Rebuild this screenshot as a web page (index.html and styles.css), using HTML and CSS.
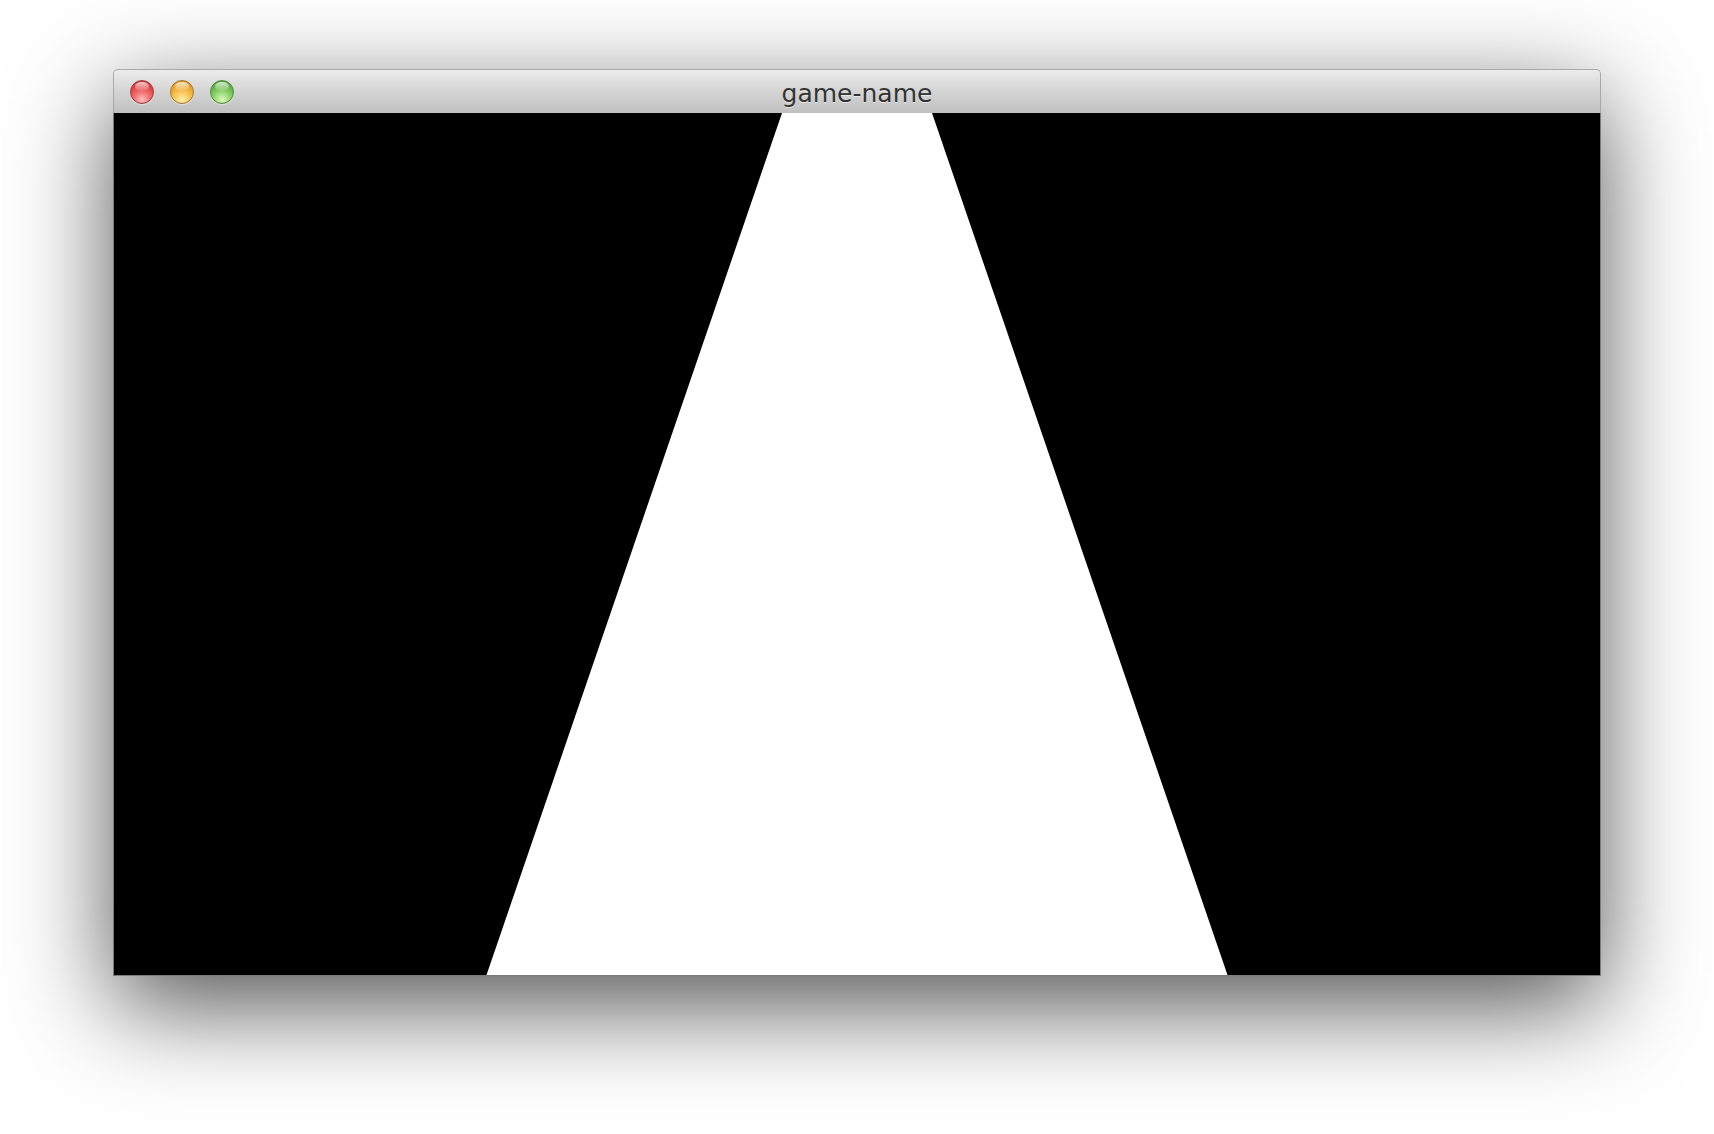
FILE: index.html
```html
<!DOCTYPE html>
<html>
<head>
<meta charset="utf-8">
<title>game-name</title>
<link rel="stylesheet" href="styles.css">
</head>
<body>
<div class="stage">
  <div class="window">
    <div class="titlebar">
      <div class="lights">
        <span class="light red"></span>
        <span class="light yellow"></span>
        <span class="light green"></span>
      </div>
      <div class="title">game-name</div>
    </div>
    <div class="screen">
      <svg class="scene" viewBox="0 0 1486 862" width="1486" height="862" xmlns="http://www.w3.org/2000/svg">
        <polygon points="668,0 818,0 1113.5,862 372.5,862" fill="#ffffff"/>
      </svg>
    </div>
  </div>
</div>
</body>
</html>
```

FILE: styles.css
```css
html, body {
  margin: 0;
  padding: 0;
}
body {
  background: #ffffff;
  width: 1714px;
  height: 1134px;
  overflow: hidden;
  font-family: "DejaVu Sans", "Liberation Sans", sans-serif;
}
.stage {
  padding: 69px 0 0 113px;
}
.window {
  width: 1488px;
  border-radius: 5px 5px 0 0;
  box-shadow: 0 30px 100px rgba(0, 0, 0, 0.68);
}
.titlebar {
  box-sizing: border-box;
  height: 44px;
  border: 1px solid #a9a9a9;
  border-bottom: none;
  border-radius: 5px 5px 0 0;
  background: linear-gradient(#ececec, #d6d6d6 45%, #c0c0c0);
  display: grid;
  align-items: center;
}
.lights,
.title {
  grid-area: 1 / 1;
}
.lights {
  display: flex;
  gap: 16px;
  padding-left: 16px;
  padding-top: 1px;
}
.light {
  width: 24px;
  height: 24px;
  border-radius: 50%;
  box-sizing: border-box;
  position: relative;
}
.light::after {
  content: "";
  position: absolute;
  left: 4px;
  top: 1px;
  width: 14px;
  height: 9px;
  border-radius: 50%;
  background: linear-gradient(rgba(255, 255, 255, 0.75), rgba(255, 255, 255, 0.05));
}
.red {
  background: radial-gradient(circle at 50% 85%, #ffc0c0 0%, #f37373 35%, #de3f3f 70%, #c42c2c 100%);
  border: 1px solid #9b3b3b;
  box-shadow: 0 1px 1px rgba(255, 255, 255, 0.5);
}
.yellow {
  background: radial-gradient(circle at 50% 85%, #fff0b0 0%, #f9c85a 35%, #e8a12a 70%, #d48918 100%);
  border: 1px solid #a5782a;
  box-shadow: 0 1px 1px rgba(255, 255, 255, 0.5);
}
.green {
  background: radial-gradient(circle at 50% 85%, #e0f8c4 0%, #98d873 35%, #60b245 70%, #4a9833 100%);
  border: 1px solid #4f8a3c;
  box-shadow: 0 1px 1px rgba(255, 255, 255, 0.5);
}
.title {
  justify-self: center;
  font-size: 25px;
  color: #333333;
  text-shadow: 0 1px 0 rgba(255, 255, 255, 0.55);
  padding-top: 4px;
}
.screen {
  box-sizing: border-box;
  width: 1488px;
  height: 863px;
  background: #000000;
  border: 1px solid #7a7a7a;
  border-top: none;
}
.scene {
  display: block;
}
```
